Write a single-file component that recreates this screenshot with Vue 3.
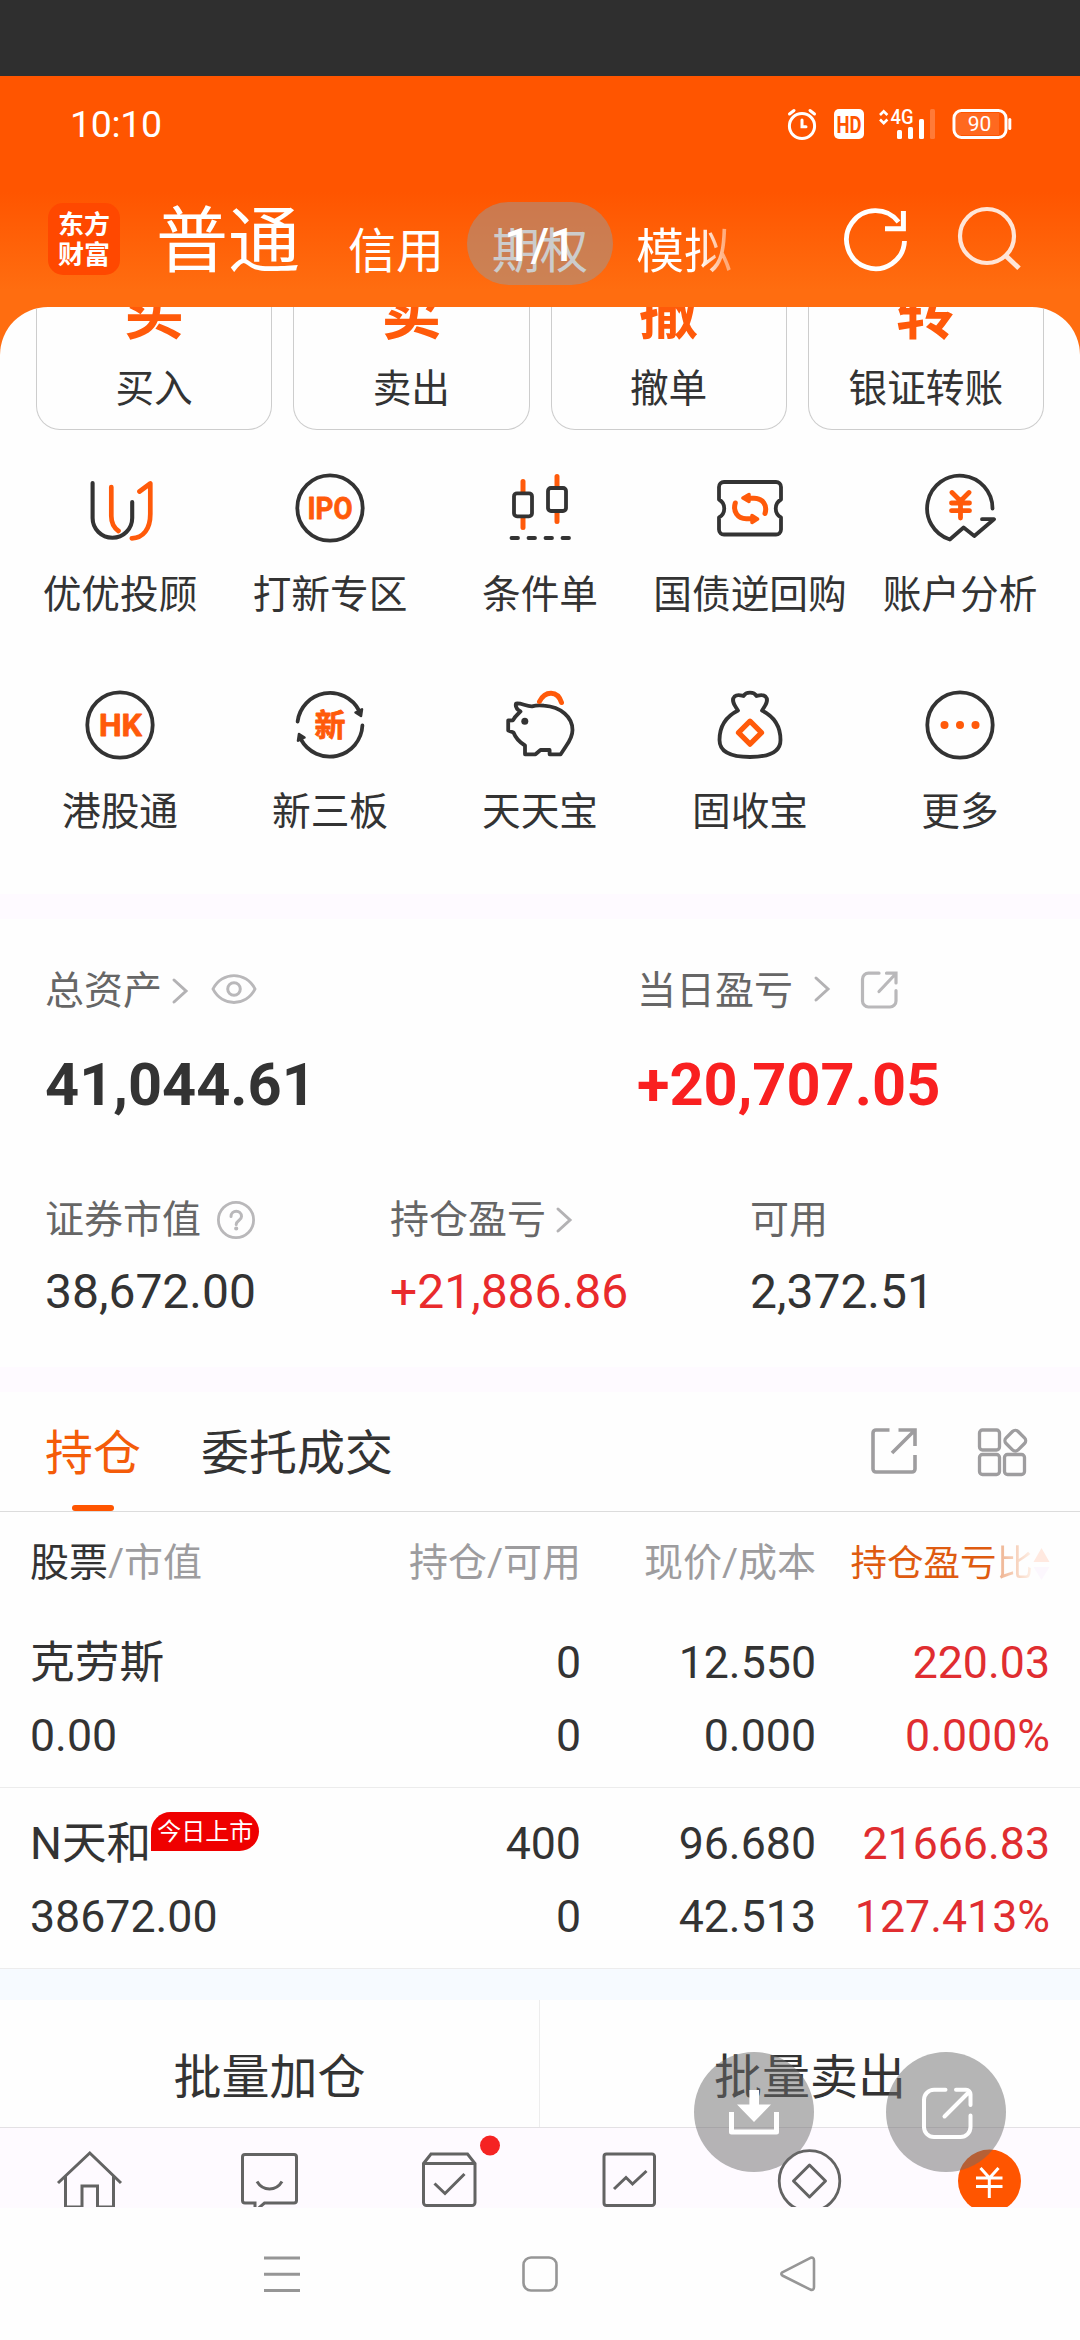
<script setup>
const accounts = ['信用', '期权', '模拟']

const actions = [
  { glyph: '买', label: '买入' },
  { glyph: '卖', label: '卖出' },
  { glyph: '撤', label: '撤单' },
  { glyph: '转', label: '银证转账' },
]

const services = [
  { icon: 'uu', label: '优优投顾' },
  { icon: 'ipo', label: '打新专区' },
  { icon: 'candle', label: '条件单' },
  { icon: 'bond', label: '国债逆回购' },
  { icon: 'analysis', label: '账户分析' },
  { icon: 'hk', label: '港股通' },
  { icon: 'neeq', label: '新三板' },
  { icon: 'piggy', label: '天天宝' },
  { icon: 'bag', label: '固收宝' },
  { icon: 'more', label: '更多' },
]

const holdings = [
  { name: '克劳斯', tag: '', value: '0.00', qty: '0', avail: '0', price: '12.550', cost: '0.000', profit: '220.03', ratio: '0.000%' },
  { name: 'N天和', tag: '今日上市', value: '38672.00', qty: '400', avail: '0', price: '96.680', cost: '42.513', profit: '21666.83', ratio: '127.413%' },
]
</script>

<template>
  <div class="app">
    <div class="letterbox"></div>

    <div class="status">
      <span class="time">10:10</span>
      <svg class="status-icons" width="226" height="34" viewBox="786 107 226 34" fill="none">
        <g stroke="#fff" stroke-width="3" stroke-linecap="round">
          <circle cx="802" cy="126" r="12.6" />
          <path d="M802 120v6.800h4M789.500 114l4.500-3.500M814.500 114l-4.500-3.500" />
        </g>
        <rect x="834" y="109" width="30" height="30" rx="5" fill="#fff" />
        <text x="849" y="132.500" class="bold-text" font-size="23" fill="#ff5500" text-anchor="middle" textLength="25" lengthAdjust="spacingAndGlyphs">HD</text>
        <path d="M880 115l3.700-3.700 3.700 3.700M880 119.500l3.700 3.700 3.700-3.700" stroke="#fff" stroke-width="2.600" />
        <text x="890.500" y="124" class="mid-text" font-size="20.500" fill="#fff" textLength="23" lengthAdjust="spacingAndGlyphs">4G</text>
        <g fill="#fff">
          <rect x="897" y="130" width="5" height="9" rx="1.500" />
          <rect x="908" y="127" width="5" height="12" rx="1.500" />
          <rect x="919" y="119" width="5" height="20" rx="1.500" />
          <rect x="930" y="109" width="5" height="30" rx="1.500" opacity=".22" />
          <rect x="1008.300" y="118" width="3" height="12" rx="1.500" />
        </g>
        <rect x="954" y="110.500" width="52" height="27" rx="7.500" stroke="#fff" stroke-width="3" />
        <rect x="956" y="113" width="43" height="22" fill="#fff" opacity=".12" />
        <text x="979.500" y="131" font-size="21" fill="#fff" text-anchor="middle">90</text>
      </svg>
    </div>

    <div class="header">
      <div class="logo"><span>东方</span><span>财富</span></div>
      <div class="current">普通</div>
      <div class="accounts">
        <span v-for="a in accounts" :key="a">{{ a }}</span>
        <div class="pager">1/1</div>
      </div>
      <svg class="tools" width="180" height="70" viewBox="843 203 180 70" fill="none">
        <path d="M904.500 241A29 29 0 1 1 898.500 222" stroke="#fff" stroke-width="4.800" />
        <path d="M903.400 211v17.800H885" stroke="#fff" stroke-width="5" />
        <g stroke="#ffe5d8" stroke-width="4.200">
          <circle cx="987" cy="236" r="27" />
          <path d="M1005.500 255.500l13.500 12.800" stroke-width="5" />
        </g>
      </svg>
    </div>

    <div class="sheet">
      <div class="actions">
        <div v-for="a in actions" :key="a.label" class="action">
          <span class="glyph">{{ a.glyph }}</span>
          <span class="label">{{ a.label }}</span>
        </div>
      </div>

      <div class="services">
        <div v-for="s in services" :key="s.icon" class="service">
          <svg width="72" height="72" viewBox="0 0 72 72" fill="none" stroke="#333" stroke-width="3.800" stroke-linecap="round" stroke-linejoin="round">
            <template v-if="s.icon === 'uu'">
              <path d="M8.600 11V46a19.800 19.800 0 0 0 39.600 0V30" stroke-width="4.100" />
              <path d="M27.300 15V44c0 7 3 12 7.200 15M55.500 19.500L66.300 11.500V42c0 15-7 24-18.500 24.300" stroke="#ff5a0a" stroke-width="4.700" />
            </template>
            <template v-else-if="s.icon === 'ipo'">
              <circle cx="36" cy="36" r="32.700" />
              <text x="36" y="47.200" class="icon-text" font-size="31" text-anchor="middle" textLength="45" lengthAdjust="spacingAndGlyphs">IPO</text>
            </template>
            <template v-else-if="s.icon === 'candle'">
              <path d="M19 9.500V20M19 46v9.500M53 4.500V15M53 40v9.500" stroke="#ff5a0a" stroke-width="5" />
              <rect x="10" y="21.300" width="18" height="23" rx="3" />
              <rect x="44" y="16" width="18" height="23" rx="3" />
              <path d="M7.500 66h6.500M24.500 66H31M41.500 66H48M58.500 66H65" />
            </template>
            <template v-else-if="s.icon === 'bond'">
              <path d="M10 10H62a5 5 0 0 1 5 5V27.500c-7 4-7 14 0 18V57.500a5 5 0 0 1-5 5H10a5 5 0 0 1-5-5V45.500c7-4 7-14 0-18V15a5 5 0 0 1 5-5z" />
              <g stroke="#ff5a0a" stroke-width="5">
                <path d="M21.300 31c-2.500 8 2 15.700 11 15.700H38M51 41.500c2.500-8-2-15.200-11-15.200H34" />
                <path d="M38 43.500v7L43.500 47zM35 22.500v7L29 26z" fill="#ff5a0a" stroke-width="3.500" />
              </g>
            </template>
            <template v-else-if="s.icon === 'analysis'">
              <path d="M68.500 36.500A32.700 32.700 0 1 0 25.800 67.500L39.600 55.500 50.300 64 70 47.200H58" />
              <path d="M28 20.500l8.500 8.500L45 20.500M27.500 31H45.500M27.500 38.700H45.500M36.500 30V46" stroke="#ff5a0a" stroke-width="4.800" />
            </template>
            <template v-else-if="s.icon === 'hk'">
              <circle cx="36" cy="36" r="32.700" />
              <text x="36.500" y="47.200" class="icon-text" font-size="31" text-anchor="middle" textLength="43" lengthAdjust="spacingAndGlyphs">HK</text>
            </template>
            <template v-else-if="s.icon === 'neeq'">
              <path d="M3.600 32.500A32.700 32.700 0 0 1 65 21.500M68.400 36.500A32.700 32.700 0 0 1 7 50.500" />
              <path d="M61.500 23.500L68 20.300 67 27zM10.500 48.500L4 51.700 5 45z" fill="#333" stroke-width="2.500" />
              <text x="36" y="47" class="icon-text" font-size="31" text-anchor="middle">新</text>
            </template>
            <template v-else-if="s.icon === 'piggy'">
              <path d="M12 14.500C17 13.500 22 17.500 28 17.300 33 16 36 16.200 40 16.700 57 18 68.500 28 68.500 41 68.500 48 65 53 61.800 57.500L56.700 65.300H45.600V61H36.500L31.500 65.300H21V56.500C16 53.500 12 50 9.500 43.500L4.200 41.500V31.500L9 31.300C11 27 13.500 25.500 16.500 22.500 13 20.500 11 18 12 14.500z" />
              <circle cx="20.800" cy="32.300" r="3.500" fill="#333" stroke="none" />
              <path d="M35.500 12.500C41 1.500 53.500 1 57.500 13.500" stroke="#ff5a0a" stroke-width="5" />
            </template>
            <template v-else-if="s.icon === 'bag'">
              <path d="M24 21.500C11 28 5.500 38 5.500 51 5.500 63 18 68 36 68S66.500 63 66.500 51C66.500 38 61 28 48 21.500 52 16 55 11 51.500 7.500 48.500 5 45 6.500 42.500 7 40 2.500 32 2.500 29.500 7 27 6.500 23.500 5 20.500 7.500 17 11 20 16 24 21.500" />
              <path d="M36 32.200L47.500 43.700 36 55.200 24.500 43.700z" stroke="#ff5a0a" stroke-width="5.200" />
            </template>
            <template v-else>
              <circle cx="36" cy="36" r="32.700" />
              <g fill="#ff5a0a" stroke="none">
                <circle cx="20.500" cy="36" r="4" /><circle cx="36" cy="36" r="4" /><circle cx="51.500" cy="36" r="4" />
              </g>
            </template>
          </svg>
          <span class="label">{{ s.label }}</span>
        </div>
      </div>

      <div class="band"></div>

      <div class="assets">
        <div class="asset total">
          <div class="caption">
            <span>总资产</span>
            <svg class="chev near" width="18" height="28" viewBox="0 0 18 28"><path d="M3 3l12 11L3 25" /></svg>
            <svg class="eye" width="46" height="34" viewBox="0 0 46 34" fill="none" stroke="#b9b8ba" stroke-width="3">
              <path d="M2 17C11-2.500 35-2.500 44 17 35 36.500 11 36.500 2 17z" stroke-linejoin="round" transform="translate(0 1.400) scale(1 .92)" /><circle cx="23" cy="17" r="6.300" />
            </svg>
          </div>
          <div class="big">41,044.61</div>
        </div>
        <div class="asset">
          <div class="caption">
            <span>当日盈亏</span>
            <svg class="chev far" width="18" height="28" viewBox="0 0 18 28"><path d="M3 3l12 11L3 25" /></svg>
            <svg class="share" width="40" height="40" viewBox="0 0 40 40" fill="none" stroke="#b9b8ba" stroke-width="3.200" stroke-linecap="round">
              <path d="M20 3.200H9.500a6 6 0 0 0-6 6V31a6 6 0 0 0 6 6H31a6 6 0 0 0 6-6V20.500M20 21.500L36.500 4M27.500 3.200H37V13" />
            </svg>
          </div>
          <div class="big red">+20,707.05</div>
        </div>
      </div>

      <div class="details">
        <div class="detail">
          <div class="caption">
            <span>证券市值</span>
            <svg class="help" width="40" height="40" viewBox="0 0 40 40" fill="none" stroke="#b9b8ba" stroke-width="2.800">
              <circle cx="20" cy="20" r="17.600" />
              <path d="M15 16.500c0-7 10.500-7 10.500 0 0 4-5.300 4-5.300 8" stroke-width="3" stroke-linecap="round" /><circle cx="20.200" cy="28.500" r="1.200" stroke-width="1.800" fill="#b9b8ba" />
            </svg>
          </div>
          <div class="mid">38,672.00</div>
        </div>
        <div class="detail">
          <div class="caption">
            <span>持仓盈亏</span>
            <svg class="chev pl" width="18" height="28" viewBox="0 0 18 28"><path d="M3 3l12 11L3 25" /></svg>
          </div>
          <div class="mid red2">+21,886.86</div>
        </div>
        <div class="detail">
          <div class="caption"><span>可用</span></div>
          <div class="mid">2,372.51</div>
        </div>
      </div>

      <div class="band"></div>

      <div class="tabs">
        <div class="tab active">持仓</div>
        <div class="tab">委托成交</div>
        <svg class="tab-tools" width="160" height="52" viewBox="869 1426 160 52" fill="none" stroke="#9e9d9f" stroke-width="3.600">
          <path d="M889.500 1430H876a3 3 0 0 0-3 3V1469a3 3 0 0 0 3 3H912a3 3 0 0 0 3-3V1455M898.500 1430H915V1446M915 1430L892 1453" />
          <g stroke-width="3.300">
            <rect x="979.500" y="1430" width="20" height="20" rx="3" />
            <rect x="979.500" y="1454.500" width="20" height="20" rx="3" />
            <rect x="1004.500" y="1454.500" width="20" height="20" rx="3" />
            <rect x="1006.800" y="1432.200" width="17" height="17" rx="4" transform="rotate(45 1015.300 1440.700)" />
          </g>
        </svg>
      </div>

      <div class="row head">
        <div class="c1"><span class="dark">股票</span>/市值</div>
        <div class="c2">持仓/可用</div>
        <div class="c3">现价/成本</div>
        <div class="c4">
          <span>持仓盈亏<span class="fade">比</span></span>
          <svg width="17" height="34" viewBox="0 0 17 34"><path d="M8.500 1L16.500 15H.5z" fill="#ffe9e0" /><path d="M8.500 33L16.500 20H.5z" fill="#fcf7fd" /></svg>
        </div>
      </div>

      <div v-for="h in holdings" :key="h.name" class="holding">
        <div class="row">
          <div class="c1"><span>{{ h.name }}</span><span v-if="h.tag" class="tag">{{ h.tag }}</span></div>
          <div class="c2">{{ h.qty }}</div>
          <div class="c3">{{ h.price }}</div>
          <div class="c4">{{ h.profit }}</div>
        </div>
        <div class="row">
          <div class="c1">{{ h.value }}</div>
          <div class="c2">{{ h.avail }}</div>
          <div class="c3">{{ h.cost }}</div>
          <div class="c4">{{ h.ratio }}</div>
        </div>
      </div>

      <div class="band blue"></div>

      <div class="batch">
        <div>批量加仓</div>
        <div>批量卖出</div>
      </div>

      <div class="tabbar">
        <svg width="1080" height="79" viewBox="0 2128.500 1080 79" fill="none" stroke="#636363" stroke-width="3">
          <path d="M58 2183.500L89.800 2153.500 121 2183.500M65.500 2177v30.500H82V2186.500H97.500v21H113.500V2177" />
          <path d="M255 2210V2203.500H245a2.500 2.500 0 0 1-2.500-2.500V2157.500a2.500 2.500 0 0 1 2.500-2.500H294a2.500 2.500 0 0 1 2.500 2.500V2201a2.500 2.500 0 0 1-2.500 2.500H264.500L257 2210M257 2182c6 10 19 10 25 0" />
          <path d="M423.500 2164H475M423.500 2164l7.500-9.500H467.500L475 2164V2203a3 3 0 0 1-3 3H426.500a3 3 0 0 1-3-3zM434.500 2184l10.500 10L464.500 2174.500" />
          <path d="M606.500 2154.500H652a2.500 2.500 0 0 1 2.500 2.500V2203.500a2.500 2.500 0 0 1-2.500 2.500H606.500a2.500 2.500 0 0 1-2.500-2.500V2157a2.500 2.500 0 0 1 2.500-2.500zM614 2189.500l12-11.500 6.500 6.500L646.500 2171.500" />
          <circle cx="809.500" cy="2181.500" r="30.300" stroke-width="2.800" />
          <path d="M809.500 2165.500L825.500 2181.500 809.500 2197.500 793.500 2181.500z" stroke-linejoin="round" />
          <circle cx="989.500" cy="2181.500" r="31.500" fill="#ff5500" stroke="none" />
          <path d="M980.500 2168.500L989.500 2178.500 998.500 2168.500M976 2178.500H1002.500M976 2187H1002.500M989.300 2178V2198.500" stroke="#fff" />
          <circle cx="490" cy="2146" r="10" fill="#f52323" stroke="none" />
        </svg>
        <svg class="float download" width="120" height="120" viewBox="694 2052 120 120">
          <circle cx="754" cy="2112" r="60" fill="rgba(108,108,108,.5)" />
          <path d="M749.400 2090h9.600v14.500H771L754 2122 737 2104.500h12.400z" fill="#fff" />
          <path d="M731.500 2112V2132H776.500V2112" fill="none" stroke="#fff" stroke-width="5" stroke-linejoin="round" />
        </svg>
        <svg class="float export" width="120" height="120" viewBox="886 2052 120 120">
          <circle cx="946" cy="2112" r="60" fill="rgba(108,108,108,.5)" />
          <path d="M945.500 2089.800H934a10 10 0 0 0-10 10V2127a10 10 0 0 0 10 10H960.500a10 10 0 0 0 10-10V2115.500M944.500 2116.500L969.500 2091.500M956 2089.800H966a4.500 4.500 0 0 1 4.500 4.500V2105" fill="none" stroke="#fff" stroke-width="4" stroke-linecap="round" />
        </svg>
      </div>

      <div class="sysnav">
        <svg width="36" height="36" viewBox="0 0 36 36" stroke="#969696" stroke-width="3"><path d="M0 2H36M0 18.200H36M0 34.500H36" /></svg>
        <svg width="36" height="36" viewBox="0 0 36 36" fill="none" stroke="#969696" stroke-width="2.600"><rect x="1.500" y="1.500" width="33" height="33" rx="7.500" /></svg>
        <svg width="36" height="36" viewBox="0 0 36 36" fill="none" stroke="#969696" stroke-width="2.600"><path d="M2.300 16.300L30.500 1.800Q34 .8 34 4.500V31Q34 34.700 30.500 33.700L2.300 19.500Q.3 18 2.300 16.300z" stroke-linejoin="round" /></svg>
      </div>
    </div>
  </div>
</template>

<style>
body {
  margin: 0;
}
</style>

<style scoped>
.app {
  width: 1080px;
  height: 2340px;
  overflow: hidden;
  display: flex;
  flex-direction: column;
  font-family: Roboto, "Noto Sans CJK SC", sans-serif;
  color: #333;
  background: linear-gradient(#ff5500 0, #ff5500 192px, #ff6d10 290px, #ff6d10 100%);
}
.app div,
.app span {
  box-sizing: border-box;
  white-space: nowrap;
}
svg {
  display: block;
  flex: none;
}
.letterbox {
  height: 76px;
  flex: none;
  background: #2f2f2f;
}
.status {
  flex: none;
  height: 96px;
  padding: 0 68px 0 70px;
  display: flex;
  justify-content: space-between;
  align-items: center;
}
.time {
  font-size: 37.500px;
  letter-spacing: -.3px;
  color: #fff;
}
.bold-text {
  font-weight: 700;
}
.mid-text {
  font-weight: 500;
}
.header {
  flex: none;
  height: 135px;
  padding: 0 57px 0 48px;
  display: flex;
  align-items: flex-start;
  color: #fff;
}
.logo {
  width: 72px;
  height: 72px;
  margin-top: 31px;
  padding-top: 7px;
  border-radius: 15px;
  background: #ff4800;
  display: flex;
  flex-direction: column;
  align-items: center;
  font-size: 26px;
  font-weight: 700;
  line-height: 30px;
}
.current {
  margin: 34px 0 0 36px;
  font-size: 72px;
  line-height: 72px;
}
.accounts {
  position: relative;
  display: flex;
  gap: 48px;
  width: 394px;
  height: 83px;
  margin: 30px 0 0 48px;
  font-size: 48px;
  line-height: 99px;
}
.accounts > span:nth-child(3) {
  background: linear-gradient(90deg, #fff 64px, rgba(255, 255, 255, .45) 90px);
  -webkit-background-clip: text;
  background-clip: text;
  color: transparent;
}
.pager {
  position: absolute;
  left: 119px;
  top: 0;
  width: 146px;
  height: 83px;
  border-radius: 42px;
  background: rgba(153, 153, 153, .5);
  text-align: center;
  font-size: 47px;
  font-weight: 500;
  line-height: 86px;
}
.tools {
  margin: 31px 0 0 auto;
}
.sheet {
  flex: 1;
  display: flex;
  flex-direction: column;
  background: #fefefe;
  border-radius: 48px 48px 0 0;
  overflow: hidden;
}
.actions {
  flex: none;
  display: flex;
  gap: 21px;
  padding: 0 36px;
  height: 123px;
}
.action {
  flex: 1;
  border: 1px solid #cdcdcd;
  border-top: 0;
  border-radius: 0 0 24px 24px;
  overflow: hidden;
  display: flex;
  flex-direction: column;
  align-items: center;
}
.glyph {
  margin-top: -24px;
  font-size: 60px;
  font-weight: 700;
  line-height: 62px;
  color: #ff5a0a;
}
.label {
  font-size: 38.700px;
  line-height: 40px;
}
.action .label {
  margin-top: 24px;
}
.services {
  flex: none;
  height: 464px;
  padding: 41.500px 15px 0;
  display: grid;
  grid-template-columns: repeat(5, 210px);
  grid-auto-rows: 217px;
}
.service {
  display: flex;
  flex-direction: column;
  align-items: center;
}
.service .label {
  margin-top: 31.500px;
}
.icon-text {
  font-weight: 700;
  fill: #ff5a0a;
  stroke: #ff5a0a;
  stroke-width: .8px;
}
.band {
  flex: none;
  height: 25px;
  background: #fefaff;
}
.band.blue {
  height: 31px;
  background: #f6faff;
}
.assets {
  flex: none;
  height: 245px;
  padding: 52px 0 0 45px;
  display: flex;
}
.total {
  width: 592px;
}
.caption {
  display: flex;
  align-items: center;
  height: 40px;
  font-size: 39px;
  line-height: 40px;
  color: #666;
}
.chev {
  fill: none;
  stroke: #b3b2b4;
  stroke-width: 3;
  stroke-linecap: round;
}
.near {
  margin-left: 9px;
}
.eye {
  margin: -4px 0 0 22px;
}
.far {
  margin: -4px 0 0 20px;
}
.share {
  margin: -3px 0 0 28px;
}
.big {
  margin-top: 38.500px;
  font-size: 59.500px;
  line-height: 70px;
  font-weight: 700;
}
.red {
  color: #f92020;
}
.red2 {
  color: #e92a2c;
}
.details {
  flex: none;
  height: 203px;
  padding: 36px 0 0 45px;
  display: grid;
  grid-template-columns: 345px 360px 1fr;
}
.help {
  margin-left: 15px;
}
.pl {
  margin-left: 9px;
}
.mid {
  margin-top: 22px;
  font-size: 48px;
  line-height: 60px;
}
.tabs {
  flex: none;
  height: 120px;
  padding: 0 51px 0 45px;
  display: flex;
  border-bottom: 1px solid #dcdcdc;
}
.tab {
  display: flex;
  flex-direction: column;
  align-items: center;
  margin-right: 60px;
  font-size: 48px;
  line-height: 124px;
}
.tab.active {
  color: #f45c09;
}
.tab.active::after {
  content: "";
  width: 42px;
  height: 6px;
  margin-top: -11px;
  border-radius: 3px;
  background: #ff5500;
}
.tab-tools {
  margin: 34px 0 0 auto;
}
.row {
  display: grid;
  grid-template-columns: 281px 270px 235px 234px;
  padding-left: 30px;
  text-align: right;
}
.row .c1 {
  display: flex;
  text-align: left;
}
.head {
  flex: none;
  height: 95px;
  font-size: 39px;
  line-height: 103px;
  color: #9d9c9e;
}
.dark {
  color: #333;
}
.head .c4 {
  display: flex;
  align-items: center;
  justify-content: flex-end;
  font-size: 36.500px;
  color: #df5b10;
}
.fade {
  background: linear-gradient(90deg, #eeb08c, #fff2ea);
  -webkit-background-clip: text;
  background-clip: text;
  color: transparent;
}
.holding {
  flex: none;
  height: 181px;
  padding-top: 20px;
  border-bottom: 1px solid #ececec;
  font-size: 44.700px;
  line-height: 73px;
}
.holding .c4 {
  color: #e02d30;
}
.tag {
  height: 39px;
  margin: 4px 0 0;
  padding: 0 6px;
  border-radius: 20px 20px 20px 0;
  background: #ef0000;
  color: #fff;
  font-size: 24px;
  line-height: 41px;
}
.batch {
  flex: none;
  height: 127px;
  display: flex;
  text-align: center;
  font-size: 48px;
  line-height: 156px;
}
.batch > div {
  width: 50%;
}
.batch > div:first-child {
  border-right: 1px solid #ededed;
}
.tabbar {
  position: relative;
  flex: none;
  height: 81px;
  border-top: 1px solid #e3e1e4;
  background: #fefaff;
}
.float {
  position: absolute;
  top: -76px;
}
.download {
  left: 694px;
}
.export {
  left: 886px;
}
.sysnav {
  flex: 1;
  display: flex;
  justify-content: center;
  gap: 222px;
  padding-top: 48px;
}
</style>
